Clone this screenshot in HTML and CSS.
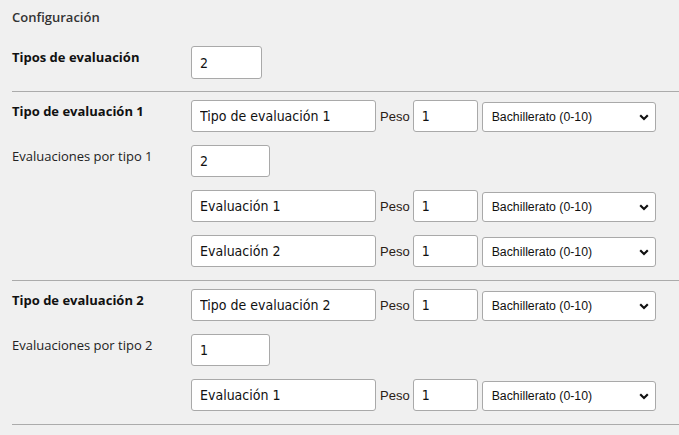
FILE: index.html
```html
<!DOCTYPE html>
<html lang="es">
<head>
<meta charset="utf-8">
<title>Configuración</title>
<link rel="stylesheet" href="styles.css">
</head>
<body>
<div class="page">
  <div class="title">Configuración</div>

  <div class="section first">
    <div class="row">
      <div class="label strong">Tipos de evaluación</div>
      <input class="field num" type="text" value="2">
    </div>
  </div>

  <div class="section">
    <div class="row">
      <div class="label strong">Tipo de evaluación 1</div>
      <input class="field name" type="text" value="Tipo de evaluación 1">
      <span class="peso">Peso</span>
      <input class="field weight" type="text" value="1">
      <div class="select-wrap">
        <select class="scale"><option>Bachillerato (0-10)</option></select>
        <svg class="chev" width="10" height="7" viewBox="0 0 10 7"><path d="M1.2 1.3 L5 5 L8.8 1.3" fill="none" stroke="#111" stroke-width="2.2"/></svg>
      </div>
    </div>
    <div class="row">
      <div class="label">Evaluaciones por tipo 1</div>
      <input class="field count" type="text" value="2">
    </div>
    <div class="row">
      <div class="label"></div>
      <input class="field name" type="text" value="Evaluación 1">
      <span class="peso">Peso</span>
      <input class="field weight" type="text" value="1">
      <div class="select-wrap">
        <select class="scale"><option>Bachillerato (0-10)</option></select>
        <svg class="chev" width="10" height="7" viewBox="0 0 10 7"><path d="M1.2 1.3 L5 5 L8.8 1.3" fill="none" stroke="#111" stroke-width="2.2"/></svg>
      </div>
    </div>
    <div class="row">
      <div class="label"></div>
      <input class="field name" type="text" value="Evaluación 2">
      <span class="peso">Peso</span>
      <input class="field weight" type="text" value="1">
      <div class="select-wrap">
        <select class="scale"><option>Bachillerato (0-10)</option></select>
        <svg class="chev" width="10" height="7" viewBox="0 0 10 7"><path d="M1.2 1.3 L5 5 L8.8 1.3" fill="none" stroke="#111" stroke-width="2.2"/></svg>
      </div>
    </div>
  </div>

  <div class="section">
    <div class="row">
      <div class="label strong">Tipo de evaluación 2</div>
      <input class="field name" type="text" value="Tipo de evaluación 2">
      <span class="peso">Peso</span>
      <input class="field weight" type="text" value="1">
      <div class="select-wrap">
        <select class="scale"><option>Bachillerato (0-10)</option></select>
        <svg class="chev" width="10" height="7" viewBox="0 0 10 7"><path d="M1.2 1.3 L5 5 L8.8 1.3" fill="none" stroke="#111" stroke-width="2.2"/></svg>
      </div>
    </div>
    <div class="row">
      <div class="label">Evaluaciones por tipo 2</div>
      <input class="field count" type="text" value="1">
    </div>
    <div class="row">
      <div class="label"></div>
      <input class="field name" type="text" value="Evaluación 1">
      <span class="peso">Peso</span>
      <input class="field weight" type="text" value="1">
      <div class="select-wrap">
        <select class="scale"><option>Bachillerato (0-10)</option></select>
        <svg class="chev" width="10" height="7" viewBox="0 0 10 7"><path d="M1.2 1.3 L5 5 L8.8 1.3" fill="none" stroke="#111" stroke-width="2.2"/></svg>
      </div>
    </div>
  </div>
</div>
</body>
</html>
```

FILE: styles.css
```css
html, body {
  margin: 0;
  padding: 0;
  background: #f0f0f0;
}

.page {
  padding: 8px 0 0 12px;
  font-family: "Open Sans", "DejaVu Sans", sans-serif;
  color: #222;
}

.title {
  font-size: 13px;
  font-weight: 600;
  line-height: 18px;
  color: #333;
  margin-bottom: 20px;
}

.section {
  border-bottom: 1px solid #ababab;
  padding: 8px 0 13px;
  display: flex;
  flex-direction: column;
  gap: 13px;
}

.section.first {
  padding: 0 0 12px;
}

.row {
  display: flex;
  align-items: flex-end;
}

.label {
  width: 179px;
  flex: none;
  align-self: flex-start;
  font-size: 13px;
  line-height: 20px;
  padding-top: 1px;
  color: #222;
}

.label.strong {
  font-weight: 700;
  color: #111;
}

.field {
  box-sizing: border-box;
  height: 32px;
  margin: 0;
  border: 1px solid #a9a9a9;
  border-radius: 3px;
  background: #fff;
  padding: 0 8px;
  font-family: "DejaVu Sans Condensed", "DejaVu Sans", sans-serif;
  font-size: 14px;
  color: #111;
  outline: none;
}

.field.num {
  width: 71px;
  height: 33px;
}

.field.count {
  width: 79px;
}

.field.name {
  width: 185px;
}

.field.weight {
  width: 65px;
}

.peso {
  align-self: center;
  font-family: "Liberation Sans", Arial, sans-serif;
  font-size: 13px;
  color: #2a2015;
  margin: 0 3px 0 4px;
}

.select-wrap {
  position: relative;
  margin-left: 4px;
}

.scale {
  appearance: none;
  -webkit-appearance: none;
  box-sizing: border-box;
  width: 174px;
  height: 30px;
  margin: 0;
  display: block;
  border: 1px solid #a9a9a9;
  border-radius: 3px;
  background: #fff;
  padding: 0 20px 0 9px;
  font-family: "Liberation Sans", Arial, sans-serif;
  font-size: 12.3px;
  color: #111;
}

.chev {
  position: absolute;
  right: 7px;
  top: 12px;
  pointer-events: none;
}
```
